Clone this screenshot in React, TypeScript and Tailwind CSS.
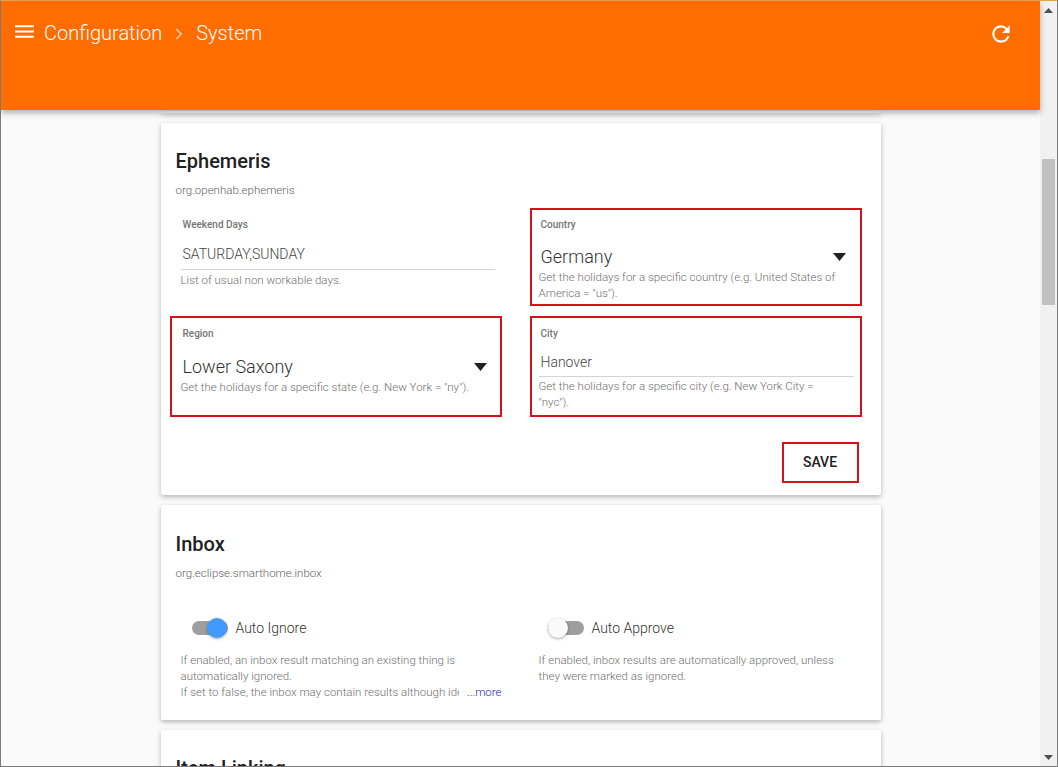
import { ChevronRight } from 'lucide-react'
import { MdMenu, MdRefresh } from 'react-icons/md'

function Label({ text }: { text: string }) {
  return <div className="pl-[2px] text-[10px] leading-[14px] font-medium text-[#757575]">{text}</div>
}

function Help({ lines }: { lines: string[] }) {
  return (
    <div className="text-[11.5px] leading-[16px] font-light text-[#6f6f6f]">
      {lines.map((line) => (
        <div key={line} className="whitespace-nowrap">
          {line}
        </div>
      ))}
    </div>
  )
}

function SelectValue({ text }: { text: string }) {
  return (
    <div className="flex h-[26px] items-center justify-between pl-[2px] pr-[2px]">
      <span className="text-[18px] font-light text-[#333333]">{text}</span>
      <svg width="13" height="8" viewBox="0 0 13 8" className="mt-[1px]">
        <polygon points="0,0 13,0 6.5,8" fill="#212121" />
      </svg>
    </div>
  )
}

function InputValue({ text, tall }: { text: string; tall?: boolean }) {
  return (
    <div className={`flex items-center border-b border-[#d4d4d4] pl-[2px] ${tall ? 'h-[28px]' : 'h-[30px]'}`}>
      <span className="text-[14px] font-light text-[#444444]">{text}</span>
    </div>
  )
}

function Toggle({ on, label }: { on: boolean; label: string }) {
  return (
    <div className="flex h-[22px] items-center">
      <div className={`relative h-[14px] w-[36px] rounded-full bg-[#9e9e9e] ${on ? 'ml-[11px]' : 'ml-[9px]'}`}>
        <div
          className={`absolute top-[-3px] h-[20px] w-[20px] rounded-full shadow-[0_1px_3px_rgba(0,0,0,0.35)] ${
            on ? 'left-[15px] bg-[#4299ff]' : 'left-0 bg-[#fafafa]'
          }`}
        />
      </div>
      <span className="ml-[8px] text-[14px] font-light text-[#333333]">{label}</span>
    </div>
  )
}

const cardClass = 'mx-auto w-[720px] shrink-0 rounded-[2px] bg-white shadow-[0_2px_5px_rgba(0,0,0,0.28)]'

export default function App() {
  return (
    <div
      className="flex h-screen w-full flex-col overflow-hidden border-r border-b border-l border-[#7a7a7a] border-t border-t-[#e0a050] bg-[#fafafa] text-[#212121]"
      style={{ fontFamily: 'Roboto, "Liberation Sans", sans-serif' }}
    >
      <div className="flex min-h-0 flex-1">
        <div className="relative flex min-w-0 flex-1 flex-col">
          {/* Header */}
          <header className="absolute inset-x-0 top-0 z-10 flex h-[109px] items-start bg-[#ff6d00] text-white shadow-[0_3px_6px_rgba(0,0,0,0.3)]">
            <div className="flex h-[64px] w-full items-start pt-[19px]">
              <MdMenu size={25} className="ml-[11px] mt-[-1px]" />
              <span className="ml-[7px] text-[20px] leading-[26px] font-light">Configuration</span>
              <ChevronRight size={18} strokeWidth={2} className="ml-[8px] mt-[5px] text-white/70" />
              <span className="ml-[8px] text-[20px] leading-[26px] font-light">System</span>
              <MdRefresh size={26} className="ml-auto mr-[26px] mt-[1px]" />
            </div>
          </header>

          {/* Scrolled page */}
          <main className="flex flex-1 flex-col gap-[10px] overflow-hidden pt-[110px] pl-[0px]">
            <div className={`${cardClass} h-[2px]`} />

            <section className={`${cardClass} h-[372px] px-[9px] pt-[24px]`}>
              <h2 className="pl-[6px] text-[20px] leading-[28px] font-medium text-[#212121]">Ephemeris</h2>
              <p className="mt-[7px] pl-[6px] text-[11.5px] leading-[16px] font-light text-[#5f5f5f]">org.openhab.ephemeris</p>

              <div className="mt-[10px] grid grid-cols-[332px_332px] gap-x-[28px] gap-y-[10px]">
                <div className="h-[98px] border-2 border-transparent pt-[8px] pl-[9px] pr-[5px]">
                  <Label text="Weekend Days" />
                  <div className="mt-[8px]">
                    <InputValue text="SATURDAY,SUNDAY" />
                  </div>
                  <div className="mt-[2px]">
                    <Help lines={['List of usual non workable days.']} />
                  </div>
                </div>

                <div className="h-[98px] border-2 border-[#d9101a] pt-[8px] pl-[7px] pr-[12px]">
                  <Label text="Country" />
                  <div className="mt-[11px]">
                    <SelectValue text="Germany" />
                  </div>
                  <Help lines={['Get the holidays for a specific country (e.g. United States of', 'America = "us").']} />
                </div>

                <div className="h-[101px] border-2 border-[#d9101a] pt-[9px] pl-[9px] pr-[11px]">
                  <Label text="Region" />
                  <div className="mt-[12px]">
                    <SelectValue text="Lower Saxony" />
                  </div>
                  <Help lines={['Get the holidays for a specific state (e.g. New York = "ny").']} />
                </div>

                <div className="h-[101px] border-2 border-[#d9101a] pt-[9px] pl-[7px] pr-[6px]">
                  <Label text="City" />
                  <div className="mt-[8px]">
                    <InputValue text="Hanover" tall />
                  </div>
                  <div className="mt-px">
                    <Help lines={['Get the holidays for a specific city (e.g. New York City =', '"nyc").']} />
                  </div>
                </div>
              </div>

              <div className="mt-[25px] flex justify-end pr-[13px]">
                <button className="flex h-[41px] w-[77px] items-center justify-center border-2 border-[#d9101a] text-[14px] font-medium text-[#212121]">
                  SAVE
                </button>
              </div>
            </section>

            <section className={`${cardClass} h-[215px] px-[9px] pt-[25px]`}>
              <h2 className="pl-[6px] text-[20px] leading-[28px] font-medium text-[#212121]">Inbox</h2>
              <p className="mt-[7px] pl-[6px] text-[11.5px] leading-[16px] font-light text-[#5f5f5f]">org.eclipse.smarthome.inbox</p>

              <div className="mt-[36px] grid grid-cols-[332px_332px] gap-x-[28px]">
                <div className="pl-[11px]">
                  <Toggle on label="Auto Ignore" />
                  <div className="mt-[13px]">
                    <Help lines={['If enabled, an inbox result matching an existing thing is', 'automatically ignored.']} />
                    <div className="flex h-[16px] items-center">
                      <div className="w-[286px] overflow-hidden text-[11.5px] leading-[16px] font-light whitespace-nowrap text-[#6f6f6f]">
                        If set to false, the inbox may contain results although identical
                      </div>
                      <span className="ml-[8px] text-[11.5px] leading-[16px] font-light text-[#1a1ac8]">...more</span>
                    </div>
                  </div>
                </div>
                <div className="pl-[9px]">
                  <Toggle on={false} label="Auto Approve" />
                  <div className="mt-[13px]">
                    <Help lines={['If enabled, inbox results are automatically approved, unless', 'they were marked as ignored.']} />
                  </div>
                </div>
              </div>
            </section>

            <section className={`${cardClass} h-[215px] px-[9px] pt-[24px]`}>
              <h2 className="pl-[6px] text-[20px] leading-[28px] font-medium text-[#212121]">Item Linking</h2>
            </section>
          </main>
        </div>

        {/* Scrollbar */}
        <div className="flex w-[17px] shrink-0 flex-col items-center bg-[#f1f1f1]">
          <svg width="9" height="5" viewBox="0 0 9 5" className="mt-[7px]">
            <polygon points="4.5,0 9,5 0,5" fill="#505050" />
          </svg>
          <div className="mt-[146px] h-[146px] w-[13px] bg-[#c1c1c1]" />
          <svg width="9" height="5" viewBox="0 0 9 5" className="mt-auto mb-[6px]">
            <polygon points="0,0 9,0 4.5,5" fill="#505050" />
          </svg>
        </div>
      </div>
    </div>
  )
}
